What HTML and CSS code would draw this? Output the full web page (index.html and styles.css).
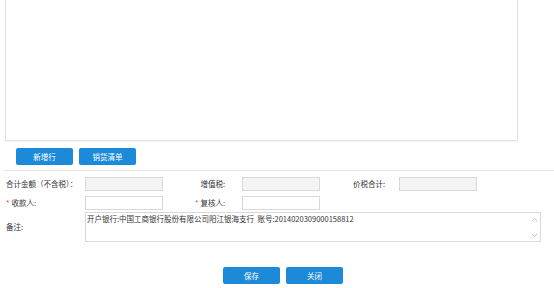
FILE: index.html
```html
<!DOCTYPE html>
<html lang="zh-CN">
<head>
    <meta charset="UTF-8">
    <meta name="viewport" content="width=device-width, initial-scale=1.0">
    <title>发票</title>
    <link rel="stylesheet" href="styles.css">
</head>
<body>
    <div class="grid-panel"></div>

    <div class="toolbar">
        <button class="btn">新增行</button>
        <button class="btn">销货清单</button>
    </div>

    <div class="divider"></div>

    <div class="form">
        <div class="row">
            <span class="lbl">合计金额（不含税）：</span>
            <input class="ipt readonly" type="text">
            <span class="lbl right lbl-mid">增值税:</span>
            <input class="ipt readonly" type="text">
            <span class="lbl right lbl-last">价税合计:</span>
            <input class="ipt readonly" type="text">
        </div>
        <div class="row">
            <span class="lbl"><i class="req">*</i>收款人:</span>
            <input class="ipt" type="text">
            <span class="lbl right lbl-mid"><i class="req">*</i>复核人:</span>
            <input class="ipt" type="text">
        </div>
        <div class="row remark-row">
            <span class="lbl">备注:</span>
            <div class="remark">
                <div class="remark-text">开户银行:中国工商银行股份有限公司阳江银海支行&nbsp; 账号:2014020309000158812</div>
                <div class="arrows">
                    <svg width="7" height="5" viewBox="0 0 7 5"><path d="M1 4 L3.5 1.5 L6 4" fill="none" stroke="#b8b8b8" stroke-width="0.9"/></svg>
                    <svg width="7" height="5" viewBox="0 0 7 5"><path d="M1 1 L3.5 3.5 L6 1" fill="none" stroke="#b8b8b8" stroke-width="0.9"/></svg>
                </div>
            </div>
        </div>
    </div>

    <div class="footer">
        <button class="btn">保存</button>
        <button class="btn">关闭</button>
    </div>
</body>
</html>
```

FILE: styles.css
```css
body{
    margin: 0;
    background: #fff;
    font-family: "Noto Sans CJK SC", "Microsoft YaHei", sans-serif;
    font-size: 7.5px;
    color: #333;
}

.grid-panel{
    margin-left: 5px;
    width: 511px;
    height: 140px;
    border: 1px solid #e3e3e3;
    border-top: none;
    box-shadow: 0 1px 1px rgba(0,0,0,0.04);
}

.toolbar{
    display: flex;
    gap: 6px;
    margin: 7px 0 0 16px;
}

.btn{
    width: 57px;
    height: 17px;
    padding: 0;
    border: none;
    border-radius: 2px;
    background: #1c8ad9;
    color: #fff;
    font-family: inherit;
    font-size: 7.5px;
    line-height: 17px;
}

.divider{
    margin: 5px 0 0 4px;
    height: 1px;
    background: #e6e6e6;
}

.form{
    margin: 6px 0 0 5px;
}

.row{
    display: flex;
    align-items: center;
    height: 14px;
    margin-bottom: 5px;
}

.lbl{
    width: 80px;
    flex: none;
    padding-left: 1px;
    box-sizing: border-box;
    line-height: 14px;
    white-space: nowrap;
}
.lbl.right{
    text-align: right;
    width: 79px;
    padding-right: 17px;
}
.lbl-last{
    padding-right: 14px !important;
}

.req{
    font-style: normal;
    color: #e0393e;
    margin-right: 2px;
}

.ipt{
    width: 78px;
    height: 14px;
    box-sizing: border-box;
    flex: none;
    margin: 0;
    padding: 0 2px;
    border: 1px solid #d9d9d9;
    background: #fff;
    font-size: 7.5px;
    outline: none;
}
.ipt.readonly{
    background: #f4f4f4;
}

.remark-row{
    height: 30px;
    margin-top: -3px;
}

.remark{
    width: 456px;
    height: 30px;
    box-sizing: border-box;
    border: 1px solid #d9d9d9;
    display: flex;
    justify-content: space-between;
    padding-left: 1px;
}
.remark-text{
    line-height: 11px;
    color: #333;
}
.arrows{
    width: 10px;
    display: flex;
    flex-direction: column;
    justify-content: space-between;
    align-items: center;
    padding: 4px 0 3px;
    margin-right: 1px;
}
.arrows svg{
    display: block;
}

.footer{
    display: flex;
    gap: 6px;
    margin: 25px 0 0 223px;
}
```
